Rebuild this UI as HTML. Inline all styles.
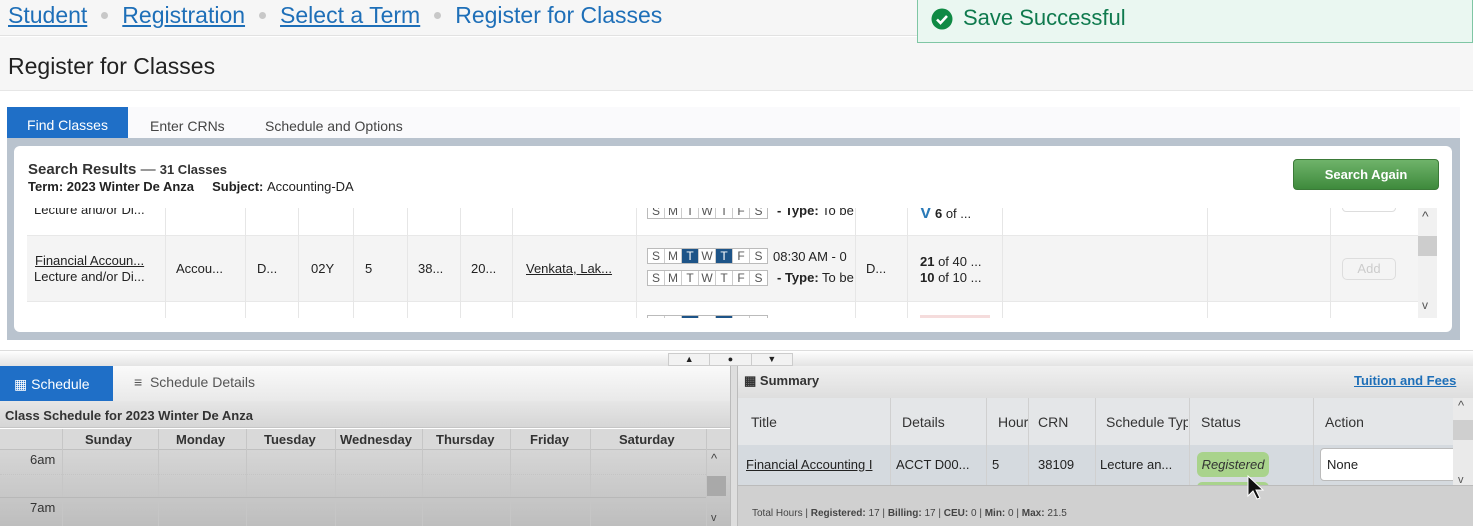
<!DOCTYPE html>
<html><head><meta charset="utf-8"><style>
*{box-sizing:border-box;margin:0;padding:0}
body{width:1473px;height:526px;overflow:hidden;position:relative;background:#fff;font-family:"Liberation Sans",sans-serif;color:#222}
.a{position:absolute}
.bc{font-size:23px;color:#1e6fb8;top:2px;white-space:nowrap}
.bc u{text-decoration:underline}
.dot{display:inline-block;width:7px;height:7px;border-radius:50%;background:#c8c8c8;margin:0 14px 4px 14px}
.vl{position:absolute;top:0;bottom:0;width:1px;background:#e6e6e6}
.cell{position:absolute;font-size:13px;white-space:nowrap}
.days{position:absolute;display:flex;border:1px solid #bbb;height:16px;font-size:12px;background:#fff}
.days span{width:17px;text-align:center;border-right:1px solid #ccc;line-height:14px;color:#555}
.days span.on{background:#1d5488;color:#fff}
.days span:last-child{border-right:none}
.sh{font-size:14px;font-weight:bold;color:#333}
</style></head><body>
<div class="a" style="left:0;top:0;width:1473px;height:36px;background:#f6f6f6;border-bottom:1px solid #e2e2e2"></div>
<div class="a bc" style="left:8px"><u>Student</u><span class="dot"></span><u>Registration</u><span class="dot"></span><u>Select a Term</u><span class="dot"></span>Register for Classes</div>
<div class="a" style="left:0;top:37px;width:1473px;height:54px;background:#f6f6f6;border-bottom:1px solid #e6e6e6"></div>
<div class="a" style="left:8px;top:53px;font-size:23px;color:#222">Register for Classes</div>
<div class="a" style="left:917px;top:-2px;width:556px;height:45px;background:#eaf7f1;border:1px solid #7fc6a4"></div>
<svg class="a" style="left:931px;top:8px" width="22" height="22" viewBox="0 0 22 22"><circle cx="11" cy="11" r="10.5" fill="#0f8a44"/><path d="M6 11.5l3.5 3.5 6.5-7" stroke="#fff" stroke-width="2.6" fill="none"/></svg>
<div class="a" style="left:963px;top:5px;font-size:22px;color:#0f7a4e">Save Successful</div>
<div class="a" style="left:7px;top:107px;width:1453px;height:31px;background:#fafafc"></div>
<div class="a" style="left:7px;top:107px;width:121px;height:31px;background:#1f6fc7;color:#fff;font-size:14px;text-align:center;line-height:37px">Find Classes</div>
<div class="a" style="left:150px;top:118px;font-size:14px;color:#444">Enter CRNs</div>
<div class="a" style="left:265px;top:118px;font-size:14px;color:#444">Schedule and Options</div>
<div class="a" style="left:7px;top:138px;width:1453px;height:202px;background:#b9c3ce"></div>
<div class="a" style="left:14px;top:146px;width:1438px;height:186px;background:#fff;border-radius:6px"></div>
<div class="a" style="left:28px;top:161px;font-size:15px;font-weight:bold;color:#333">Search Results <span style="font-weight:normal">—</span> <span style="font-size:13px">31 Classes</span></div>
<div class="a" style="left:28px;top:179px;font-size:13px;font-weight:bold;color:#222">Term: 2023 Winter De Anza &nbsp;&nbsp;&nbsp; Subject: <span style="font-weight:normal">Accounting-DA</span></div>
<div class="a" style="left:1293px;top:159px;width:146px;height:31px;border-radius:4px;background:linear-gradient(#6fb36a,#3e8a3c);border:1px solid #3b7a38;color:#fff;font-size:13px;font-weight:bold;text-align:center;line-height:29px">Search Again</div>
<div class="a" style="left:27px;top:208px;width:1391px;height:110px;overflow:hidden">
 <div class="a" style="left:0;top:27px;width:1391px;height:67px;background:#f4f4f4;border-top:1px solid #e8e8e8;border-bottom:1px solid #e8e8e8"></div>
 <div class="vl" style="left:138px"></div><div class="vl" style="left:218px"></div><div class="vl" style="left:271px"></div><div class="vl" style="left:326px"></div><div class="vl" style="left:380px"></div><div class="vl" style="left:433px"></div><div class="vl" style="left:485px"></div><div class="vl" style="left:609px"></div><div class="vl" style="left:828px"></div><div class="vl" style="left:880px"></div><div class="vl" style="left:975px"></div><div class="vl" style="left:1180px"></div><div class="vl" style="left:1303px"></div>
 <div class="cell" style="left:7px;top:-6px">Lecture and/or Di...</div>
 <div class="days" style="left:620px;top:-5px"><span>S</span><span>M</span><span>T</span><span>W</span><span>T</span><span>F</span><span>S</span></div>
 <div class="cell" style="left:750px;top:-5px"><b>- Type:</b> To be</div>
 <div class="cell" style="left:893px;top:-5px"><span style="color:#2a7ab8;font-weight:bold;font-size:17px">V</span> <b>6</b> of ...</div>
 <div class="a" style="left:1315px;top:-6px;width:54px;height:10px;border:1px solid #ddd;border-radius:4px"></div>
 <div class="cell" style="left:8px;top:45px;text-decoration:underline">Financial Accoun...</div>
 <div class="cell" style="left:7px;top:61px">Lecture and/or Di...</div>
 <div class="cell" style="left:149px;top:53px">Accou...</div>
 <div class="cell" style="left:230px;top:53px">D...</div>
 <div class="cell" style="left:284px;top:53px">02Y</div>
 <div class="cell" style="left:338px;top:53px">5</div>
 <div class="cell" style="left:391px;top:53px">38...</div>
 <div class="cell" style="left:444px;top:53px">20...</div>
 <div class="cell" style="left:499px;top:53px;text-decoration:underline">Venkata, Lak...</div>
 <div class="days" style="left:620px;top:40px"><span>S</span><span>M</span><span class="on">T</span><span>W</span><span class="on">T</span><span>F</span><span>S</span></div>
 <div class="days" style="left:620px;top:62px"><span>S</span><span>M</span><span>T</span><span>W</span><span>T</span><span>F</span><span>S</span></div>
 <div class="cell" style="left:746px;top:41px">08:30 AM - 0</div>
 <div class="cell" style="left:750px;top:62px"><b>- Type:</b> To be</div>
 <div class="cell" style="left:839px;top:53px">D...</div>
 <div class="cell" style="left:893px;top:46px"><b>21</b> of 40 ...</div>
 <div class="cell" style="left:893px;top:62px"><b>10</b> of 10 ...</div>
 <div class="a" style="left:1315px;top:50px;width:54px;height:22px;border:1px solid #ddd;border-radius:5px;color:#ccc;font-size:13px;text-align:center;line-height:20px">Add</div>
 <div class="days" style="left:620px;top:107px"><span></span><span></span><span class="on"></span><span></span><span class="on"></span><span></span><span></span></div>
 <div class="a" style="left:893px;top:107px;width:70px;height:8px;background:#f5dcdc"></div>
</div>
<div class="a" style="left:1418px;top:208px;width:19px;height:110px;background:#f1f1f1"></div>
<div class="a" style="left:1418px;top:236px;width:19px;height:20px;background:#cdcdcd"></div>
<div class="a" style="left:1422px;top:208px;font-size:14px;color:#555">^</div>
<div class="a" style="left:1422px;top:298px;font-size:12px;color:#555">v</div>
<div class="a" style="left:0;top:350px;width:1473px;height:16px;background:linear-gradient(#fff,#e3e3e3);border-top:1px solid #ddd"></div>
<div class="a" style="left:668px;top:353px;width:125px;height:13px;border:1px solid #ccc;background:#f2f2f2;font-size:9px;display:flex"><span style="flex:1;text-align:center;border-right:1px solid #ccc">▲</span><span style="flex:1;text-align:center;border-right:1px solid #ccc">●</span><span style="flex:1;text-align:center">▼</span></div>
<div class="a" style="left:0;top:366px;width:730px;height:35px;background:linear-gradient(#fafafa,#e9e9e9)"></div>
<div class="a" style="left:0;top:366px;width:113px;height:35px;background:#1f6fc7;color:#fff;font-size:14px;line-height:37px;padding-left:14px">&#9638; Schedule</div>
<div class="a" style="left:134px;top:374px;font-size:14px;color:#555">&#8801;&nbsp; Schedule Details</div>
<div class="a" style="left:0;top:401px;width:730px;height:27px;background:linear-gradient(#e6e6e6,#d6d6d6);border-bottom:1px solid #c6c6c6"></div>
<div class="a sh" style="left:5px;top:408px;font-size:13px">Class Schedule for 2023 Winter De Anza</div>
<div class="a" style="left:0;top:429px;width:730px;height:97px;background:linear-gradient(#dcdcdc,#bebebe)"></div>
<div class="a" style="left:0;top:429px;width:730px;height:21px;background:#d9d9d9;border-bottom:1px solid #c0c0c0"></div>
<div class="a" style="left:0;top:429px;width:730px;height:97px">
 <div class="vl" style="left:62px;background:#c6c6c6"></div><div class="vl" style="left:158px;background:#c6c6c6"></div><div class="vl" style="left:246px;background:#c6c6c6"></div><div class="vl" style="left:335px;background:#c6c6c6"></div><div class="vl" style="left:422px;background:#c6c6c6"></div><div class="vl" style="left:510px;background:#c6c6c6"></div><div class="vl" style="left:590px;background:#c6c6c6"></div><div class="vl" style="left:706px;background:#c6c6c6"></div>
 <div class="a" style="left:0;top:45px;width:706px;border-top:1px dotted #c4c4c4"></div>
 <div class="a" style="left:0;top:68px;width:706px;border-top:1px solid #b8b8b8"></div>
 <div class="a sh" style="left:85px;top:3px;font-size:13px">Sunday</div>
 <div class="a sh" style="left:176px;top:3px;font-size:13px">Monday</div>
 <div class="a sh" style="left:264px;top:3px;font-size:13px">Tuesday</div>
 <div class="a sh" style="left:340px;top:3px;font-size:13px">Wednesday</div>
 <div class="a sh" style="left:436px;top:3px;font-size:13px">Thursday</div>
 <div class="a sh" style="left:530px;top:3px;font-size:13px">Friday</div>
 <div class="a sh" style="left:619px;top:3px;font-size:13px">Saturday</div>
 <div class="a" style="left:30px;top:23px;font-size:13px;color:#333">6am</div>
 <div class="a" style="left:30px;top:71px;font-size:13px;color:#333">7am</div>
 <div class="a" style="left:707px;top:47px;width:19px;height:20px;background:#a9a9a9"></div>
 <div class="a" style="left:711px;top:22px;font-size:13px;color:#444">^</div>
 <div class="a" style="left:711px;top:83px;font-size:11px;color:#444">v</div>
</div>
<div class="a" style="left:730px;top:366px;width:8px;height:160px;background:#dedede;border-left:1px solid #bbb;border-right:1px solid #bbb"></div>
<div class="a" style="left:738px;top:366px;width:735px;height:32px;background:linear-gradient(#f0f0f0,#dedede)"></div>
<div class="a sh" style="left:744px;top:373px;font-size:13px">&#9638; Summary</div>
<div class="a" style="left:1354px;top:373px;font-size:13px;font-weight:bold;color:#1e6fb8;text-decoration:underline">Tuition and Fees</div>
<div class="a" style="left:738px;top:398px;width:735px;height:47px;background:#e4e6e8"></div>
<div class="a" style="left:738px;top:445px;width:735px;height:40px;background:#d5dadf"></div>
<div class="a" style="left:738px;top:398px;width:715px;height:87px">
 <div class="vl" style="left:152px;background:#d0d0d0"></div><div class="vl" style="left:248px;background:#d0d0d0"></div><div class="vl" style="left:290px;background:#d0d0d0"></div><div class="vl" style="left:357px;background:#d0d0d0"></div><div class="vl" style="left:451px;background:#d0d0d0"></div><div class="vl" style="left:575px;background:#d0d0d0"></div>
 <div class="cell" style="left:13px;top:16px;font-size:14px;color:#333">Title</div>
 <div class="cell" style="left:164px;top:16px;font-size:14px;color:#333">Details</div>
 <div class="cell" style="left:260px;top:16px;font-size:14px;color:#333;width:30px;overflow:hidden">Hour</div>
 <div class="cell" style="left:300px;top:16px;font-size:14px;color:#333">CRN</div>
 <div class="cell" style="left:368px;top:16px;font-size:14px;color:#333;width:82px;overflow:hidden">Schedule Typ</div>
 <div class="cell" style="left:463px;top:16px;font-size:14px;color:#333">Status</div>
 <div class="cell" style="left:587px;top:16px;font-size:14px;color:#333">Action</div>
 <div class="cell" style="left:8px;top:59px;font-size:13px;text-decoration:underline">Financial Accounting I</div>
 <div class="cell" style="left:158px;top:59px;font-size:13px">ACCT D00...</div>
 <div class="cell" style="left:254px;top:59px;font-size:13px">5</div>
 <div class="cell" style="left:300px;top:59px;font-size:13px">38109</div>
 <div class="cell" style="left:362px;top:59px;font-size:13px">Lecture an...</div>
 <div class="a" style="left:459px;top:54px;width:72px;height:25px;background:#a9d38c;border-radius:6px;font-size:13px;font-style:italic;color:#333;text-align:center;line-height:25px">Registered</div>
 <div class="a" style="left:459px;top:84px;width:72px;height:10px;background:#a9d38c;border-radius:6px"></div>
 <div class="a" style="left:582px;top:50px;width:140px;height:33px;background:#fff;border:1px solid #bbb;border-radius:4px;font-size:13px;line-height:31px;padding-left:6px">None</div>
</div>
<div class="a" style="left:1453px;top:398px;width:20px;height:87px;background:#eaeaea"></div>
<div class="a" style="left:1453px;top:420px;width:20px;height:20px;background:#cfcfcf"></div>
<div class="a" style="left:1458px;top:398px;font-size:13px;color:#555">^</div>
<div class="a" style="left:1458px;top:474px;font-size:11px;color:#555">v</div>
<div class="a" style="left:738px;top:485px;width:735px;height:41px;background:#d0d0d0;border-top:1px solid #bbb"></div>
<div class="a" style="left:752px;top:508px;font-size:10px;color:#444">Total Hours | <b>Registered:</b> 17 | <b>Billing:</b> 17 | <b>CEU:</b> 0 | <b>Min:</b> 0 | <b>Max:</b> 21.5</div>
<svg class="a" style="left:1246px;top:475px" width="20" height="26" viewBox="0 0 20 26"><path d="M2 1v20l5-5 4 8 3-1-4-8h7z" fill="#111" stroke="#fff" stroke-width="1"/></svg>
</body></html>
